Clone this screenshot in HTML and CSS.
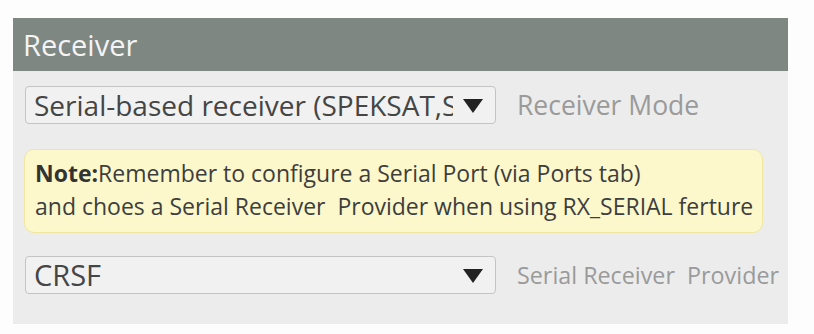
FILE: index.html
```html
<!DOCTYPE html>
<html>
<head>
<meta charset="utf-8">
<link rel="stylesheet" href="styles.css">
</head>
<body>
<div class="panel">
  <div class="header">Receiver</div>
  <div class="body">
    <div class="row">
      <div class="select"><span class="value">Serial-based receiver (SPEKSAT,SBUS,SUMD,SUMH,XBUS,SRXL)</span><svg class="arrow" width="20" height="14" viewBox="0 0 20 14"><path d="M0 0H20L10 14Z" fill="#222"/></svg></div>
      <span class="label">Receiver Mode</span>
    </div>
    <div class="note"><b>Note:</b>Remember to configure a Serial Port (via Ports tab)<br>and choes a Serial Receiver&nbsp; Provider when using RX_SERIAL ferture</div>
    <div class="row">
      <div class="select"><span class="value big">CRSF</span><svg class="arrow" width="20" height="14" viewBox="0 0 20 14"><path d="M0 0H20L10 14Z" fill="#222"/></svg></div>
      <span class="label small">Serial Receiver&nbsp; Provider</span>
    </div>
  </div>
</div>
</body>
</html>
```
FILE: styles.css
```css
html, body {
  margin: 0;
  padding: 0;
  background: #fdfdfd;
  font-family: "Open Sans", sans-serif;
}
.panel {
  margin: 18px 0 0 13px;
  width: 775px;
  background: #ececec;
}
.header {
  height: 53px;
  line-height: 53px;
  background: #7f8783;
  color: #f4f4f4;
  font-size: 29px;
  padding-left: 10px;
}
.body {
  padding: 15px 12px 30px 12px;
  display: flex;
  flex-direction: column;
}
.row {
  display: flex;
  align-items: center;
  gap: 21px;
  white-space: nowrap;
  line-height: 36px;
}
.select {
  box-sizing: border-box;
  flex: none;
  width: 471px;
  height: 38px;
  border: 1px solid #c4c4c4;
  border-radius: 4px;
  background: #f1f1f1;
  display: flex;
  align-items: center;
  padding: 0 12px 0 8px;
  color: #454545;
}
.value {
  flex: 1;
  overflow: hidden;
  white-space: nowrap;
  font-size: 28px;
  line-height: 36px;
  margin-right: 10px;
}
.value.big {
  font-size: 29px;
}
.arrow {
  flex: none;
  display: block;
  margin-top: 1px;
}
.label {
  color: #9a9a9a;
  font-size: 26.5px;
}
.label.small {
  font-size: 23.3px;
}
.note {
  margin: 25px 13px 23px -1px;
  box-sizing: border-box;
  height: 84px;
  border: 1px solid #f0e6a0;
  border-radius: 10px;
  background: #fcf8cb;
  color: #3e3e3e;
  font-size: 23px;
  line-height: 33px;
  padding: 7px 10px;
  white-space: nowrap;
}
.note b {
  color: #333;
}
```
